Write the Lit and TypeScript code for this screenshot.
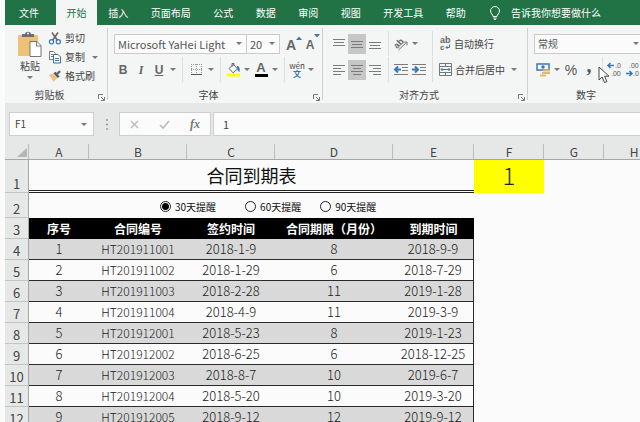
import { LitElement, html, css, svg, nothing } from "lit";
import { customElement, state } from "lit/decorators.js";
import { classMap } from "lit/directives/class-map.js";

const TABS = ["插入", "页面布局", "公式", "数据", "审阅", "视图", "开发工具", "帮助"];

const HEADINGS = ["序号", "合同编号", "签约时间", "合同期限（月份）", "到期时间"];

const CONTRACTS: [string, string, string, string, string][] = [
  ["1", "HT201911001", "2018-1-9", "8", "2018-9-9"],
  ["2", "HT201911002", "2018-1-29", "6", "2018-7-29"],
  ["3", "HT201911003", "2018-2-28", "11", "2019-1-28"],
  ["4", "HT201911004", "2018-4-9", "11", "2019-3-9"],
  ["5", "HT201912001", "2018-5-23", "8", "2019-1-23"],
  ["6", "HT201912002", "2018-6-25", "6", "2018-12-25"],
  ["7", "HT201912003", "2018-8-7", "10", "2019-6-7"],
  ["8", "HT201912004", "2018-5-20", "10", "2019-3-20"],
  ["9", "HT201912005", "2018-9-12", "12", "2019-9-12"],
];

const icon = (w: number, h: number, body: unknown) =>
  html`<svg width=${w} height=${h} viewBox="0 0 ${w} ${h}" fill="none" aria-hidden="true">${body}</svg>`;

const GREY = "#7c7c7c";
const BLUE = "#3a78b5";

const ICONS = {
  bulb: icon(12, 14, svg`<path d="M4 10.500C4 8.500 1.500 7.500 1.500 5a4.500 4.500 0 0 1 9 0C10.500 7.500 8 8.500 8 10.500zM4.300 12h3.400M5 13.400h2" stroke="#fff"/>`),
  paste: icon(26, 27, svg`
    <path d="M1 4h20v21H1z" fill="#eec276"/>
    <path d="M5 3h3c0-3 6-3 6 0h3v3H5z" fill="#6d6d6d"/><circle cx="11" cy="2.500" r="1" fill="#f4f5f5"/>
    <path d="M13 10.500h7l4 4V25.500H13z" fill="#fff" stroke="#777"/><path d="M19.500 10.500v4.500H24" stroke="#777"/>`),
  cut: icon(14, 13, svg`
    <path d="M4 0.500l5.500 8M10 0.500l-5.500 8" stroke="#666" stroke-width="1.600"/>
    <circle cx="3.500" cy="9.800" r="2.100" stroke="${BLUE}" stroke-width="1.200"/>
    <circle cx="10.300" cy="9.800" r="2.100" stroke="${BLUE}" stroke-width="1.200"/>`),
  copy: icon(14, 13, svg`
    <path d="M1.500 0.500h4l2 2v6h-6z" fill="#fff" stroke="#777"/>
    <path d="M5.500 3.500h4.500l2.500 2.500v6h-7z" fill="#fff" stroke="#666"/>
    <path d="M3 3.500h2M3 5.500h2M7 7.500h4M7 9.500h4" stroke="${BLUE}"/>`),
  brush: icon(15, 13, svg`
    <path d="M1 5l5-2 4 5-4 4.500C4.500 9.500 3 7 1 5z" fill="#eec08a"/>
    <path d="M6 3l2-1.500 4.500 5L10.500 8z" fill="#555"/><path d="M9.500 4L13 0.800" stroke="#666" stroke-width="2.400"/>`),
  launcher: icon(7, 7, svg`<path d="M0.500 5V0.500H5M3 3l3 3M6.500 3v3.500H3" stroke="#777"/>`),
  borders: icon(13, 13, svg`
    <path d="M1.500 1v10M6.500 1v10M11.500 1v10M1 1.500h11M1 6.500h11" stroke="#999" stroke-dasharray="1 1"/>
    <path d="M1 11.500h11" stroke="#555"/>`),
  fill: icon(15, 14, svg`
    <path d="M3 5.500L7.500 1.500l4 4.500-4.500 3.800z" fill="#fff" stroke="#666"/><path d="M6 4V0.500h2V3" stroke="#666"/>
    <path d="M11 3c2.500 0 3 2.500 2.500 6-2-0.500-2.500-3-2.500-6z" fill="${BLUE}"/>
    <path d="M0.500 10.500h13.500v3H0.500z" fill="#ffff00"/>`),
  grow: svg`<path d="M0 4L3 0.500 6 4z" fill="${BLUE}"/>`,
  orient: icon(14, 14, svg`<path d="M4.500 13L12.500 5.500M9.500 5h3.500v3.500" stroke="#777"/>
    <text x="-1" y="9" transform="rotate(-45 5 6)" font-size="9" font-weight="bold" fill="#666">ab</text>`),
  wrap: icon(12, 15, svg`
    <text x="1" y="7" font-size="9" font-weight="bold" fill="#666">ab</text>
    <text x="1" y="14" font-size="8" font-weight="bold" fill="#666">c</text>
    <path d="M10.500 8.500v3H7M8.500 10L7 11.500l1.500 1.500" stroke="${BLUE}"/>`),
  merge: icon(13, 13, svg`
    <path d="M0.500 0.500h12v12h-12zM0.500 3.500h12M0.500 9.500h12M6.500 0.500v3M6.500 9.500v3" stroke="#777"/>
    <path d="M2 6.500h9M3.500 5L2 6.500 3.500 8M9.500 5L11 6.500 9.500 8" stroke="${BLUE}"/>`),
  currency: icon(15, 14, svg`
    <path d="M1 1h12v6H1z" fill="#fff" stroke="${BLUE}" stroke-width="1.500"/>
    <circle cx="7" cy="4" r="1.800" fill="${BLUE}"/>
    <path d="M7 7.500h7M6 10h8M4 12.500h6" stroke="#e9b870" stroke-width="2"/>`),
  pointer: icon(13, 18, svg`<path d="M1 1v13l3.200-3 2.300 5.500 2.400-1-2.300-5.300H11z" fill="#fff" stroke="#444"/>`),
};

const lines = (rows: [number, number, number][]) =>
  icon(12, 10, rows.map(([x, y, w]) => svg`<path d="M${x} ${y + 0.5}h${w}" stroke=${GREY}/>`));

const ALIGN = {
  top: lines([[0, 0, 12], [1, 3, 10], [0, 6, 12]]),
  middle: lines([[0, 2, 12], [1, 5, 10], [0, 8, 12]]),
  bottom: lines([[0, 3, 12], [1, 6, 10], [0, 9, 12]]),
  left: lines([[0, 0, 12], [0, 3, 8], [0, 6, 12], [0, 9, 8]]),
  center: lines([[0, 0, 12], [2, 3, 8], [0, 6, 12], [2, 9, 8]]),
  right: lines([[0, 0, 12], [4, 3, 8], [0, 6, 12], [4, 9, 8]]),
};

const indent = (outward: boolean) =>
  icon(14, 12, svg`
    <path d="M0 0.500h14M8 3.500h6M8 6.500h6M0 10.500h14" stroke=${GREY}/>
    <path d=${outward ? "M1 5.500h6M4 2.500L1 5.500l3 3" : "M0 5.500h6M3 2.500l3 3-3 3"} stroke=${BLUE} stroke-width="2"/>`);

const decimals = (more: boolean) =>
  icon(14, 15, svg`
    <text x=${more ? 7 : 3} y="6" font-size="7" fill="#555">${more ? ".0" : ".00"}</text>
    <text x=${more ? 3 : 7} y="14" font-size="7" fill="#555">${more ? ".00" : ".0"}</text>
    <path d=${more ? "M0 3.500h6M2.500 1L0 3.500 2.500 6" : "M0 11.500h6M3.500 9L6 11.500 3.500 14"} stroke=${BLUE} stroke-width="1.600"/>`);

@customElement("app-root")
export class AppRoot extends LitElement {
  @state() private days = 30;

  static styles = css`
    :host {
      display: block;
      min-height: 100vh;
      max-height: 100vh;
      box-sizing: border-box;
      padding-left: 5px;
      overflow: hidden;
      position: relative;
      background: #fbfbfb;
      color: #444;
      font: 10px/14px "Noto Sans CJK SC", sans-serif;
    }
    * { box-sizing: border-box; }
    svg { display: block; flex: none; overflow: visible; }
    svg text { font-family: "Liberation Sans", sans-serif; }
    button, input, select {
      font: inherit;
      color: inherit;
      margin: 0;
      padding: 0;
      border: 0;
      background: none;
      border-radius: 0;
      white-space: nowrap;
    }
    .tabs { display: flex; height: 25px; background: #217346; color: #fff; }
    .tab { padding: 0 11px; flex: 1 1 auto; }
    .tab.file { flex: none; width: 51px; padding: 0 3px 0 0; }
    .tab.active { flex: none; width: 41px; padding: 0; background: #f4f5f5; color: #217346; }
    .tab-list { display: flex; flex: 0 0 380px; }
    .tell { display: flex; align-items: center; gap: 10px; padding-left: 12px; }

    .ribbon { display: flex; height: 78px; background: #f4f5f5; }
    .group { flex: none; display: flex; flex-direction: column; padding: 6px 0 0 6px; position: relative; }
    .group + .group::before {
      content: "";
      position: absolute;
      left: -1px;
      top: 3px;
      bottom: 3px;
      width: 1px;
      background: #cfd0d0;
    }
    .clip { width: 103px; }
    .font { width: 215px; }
    .align { width: 205px; padding-left: 7px; }
    .number { flex: 1 0 112px; }
    .rows { display: flex; flex-direction: column; gap: 1px; height: 56px; }
    .row { display: flex; align-items: center; height: 25px; }
    .foot { display: flex; align-items: center; height: 16px; margin-left: -6px; }
    .foot span { flex: 1; text-align: center; }
    .foot button { width: 14px; padding: 4px 0 0 4px; }
    .tool { display: flex; align-items: center; justify-content: center; width: 18px; height: 20px; flex: none; }
    .tool.wide { width: 20px; }
    .tool.on { background: #c6c6c6; }
    .tool.text { width: auto; padding-left: 3px; gap: 3px; }
    .drop { display: flex; align-items: center; justify-content: center; width: 10px; height: 20px; flex: none; }
    .drop::after, .combo::after {
      content: "";
      border: 3px solid transparent;
      border-top-color: #777;
      border-bottom: 0;
    }
    .sep { flex: none; width: 8px; height: 25px; background: linear-gradient(#dcdddd, #dcdddd) center / 1px 100% no-repeat; }
    .space { width: 8px; }
    .gap { width: 4px; }
    .letter { font: bold 12px/14px "Liberation Sans", sans-serif; color: #666; }
    .italic { font-family: "Liberation Serif", serif; font-style: italic; }
    .under { text-decoration: underline; }
    .sized { align-items: flex-start; width: 18px; font-size: 12px; line-height: 22px; }
    .sized.big { font-size: 14px; width: 20px; }
    .sized svg { margin-top: 2px; }
    .flip { transform: rotate(180deg); display: flex; align-items: flex-end; height: 8px; }
    .ink { flex-direction: column; }
    .ink span { border-bottom: 3px solid #000; width: 13px; font-size: 13px; line-height: 12px; text-align: center; }
    .ink.pinyin { font: 8px/8px "Noto Sans CJK SC", sans-serif; }
    .pinyin b { color: #3a78b5; font-size: 8px; line-height: 8px; }
    .percent { font: 14px/14px "Liberation Sans", sans-serif; color: #555; }
    .comma { font: bold 20px/10px "Liberation Serif", serif; color: #555; padding-bottom: 10px; }

    .combo { display: flex; align-items: center; height: 20px; border: 1px solid #cacbcb; background: #fbfbfb; padding-right: 4px; flex: none; }
    .combo + .combo { border-left: 0; }
    .combo select { appearance: none; flex: 1; min-width: 0; padding-left: 3px; font: 11px/16px "Noto Sans CJK SC", sans-serif; color: #555; }
    .face { width: 133px; }
    .size { width: 33px; }
    .format { width: 110px; }
    .format select { font-size: 10px; }

    .clip .body { display: flex; height: 56px; padding-left: 6px; gap: 5px; }
    .paste { display: flex; flex-direction: column; align-items: center; width: 26px; }
    .paste .drop { height: 8px; }
    .paste .label { line-height: 15px; }
    .stack { display: flex; flex-direction: column; gap: 5px; }
    .stack .line { display: flex; height: 14px; }
    .stack .line .drop { height: 14px; margin-left: 5px; }
    .stack .cmd { display: flex; align-items: center; gap: 3px; }
    .stack .cmd svg { width: 14px; }

    .bar { display: flex; height: 33px; padding: 9px 0 0 4px; background: #e6e8e7; }
    .box { display: flex; align-items: center; height: 24px; border: 1px solid #cdcfce; background: #fbfbfb; }
    .name { width: 85px; padding-right: 4px; }
    .name input { flex: 1; min-width: 0; padding-left: 5px; }
    .dots { width: 25px; display: flex; align-items: center; justify-content: center; color: #999; }
    .edit { width: 92px; justify-content: space-around; margin-right: 2px; }
    .fx { font: italic bold 12px/14px "Liberation Serif", serif; color: #777; }
    .formula { flex: 1; border-right: 0; }
    .formula input { width: 100%; padding-left: 9px; font-size: 11px; }

    .sheet { overflow: hidden; }
    table { table-layout: fixed; width: 659px; border-collapse: separate; border-spacing: 0; }
    .c-head { width: 24px; }
    .c-a, .c-g { width: 60px; }
    .c-b { width: 98px; }
    .c-c { width: 88px; }
    .c-d { width: 118px; }
    .c-e { width: 81px; }
    .c-f { width: 70px; }
    th, td { padding: 0; height: 21px; text-align: center; font-weight: normal; white-space: nowrap; overflow: hidden; }
    .letters th {
      height: 24px;
      vertical-align: bottom;
      font-size: 12px;
      line-height: 14px;
      border-bottom: 1px solid #a5a7a6;
      background: linear-gradient(#bcbebd, #bcbebd) right bottom / 1px 15px no-repeat #e6e8e7;
    }
    .corner svg { margin: 0 2px 2px auto; }
    .rowno {
      background: #e6e8e7;
      border-right: 1px solid #a5a7a6;
      border-bottom: 1px solid #c3c5c4;
      vertical-align: bottom;
      font-size: 13px;
      line-height: 17px;
    }
    .r1 th, .r1 td { height: 33px; }
    .r2 th, .r2 td { height: 25px; }
    .title { font-size: 18px; line-height: 26px; color: #111; border-bottom: 3px double #222; }
    .flag { font-size: 24px; line-height: 30px; font-weight: 300; color: #222; background: #ffff00; vertical-align: top; }
    .choice fieldset { display: flex; gap: 19px; margin: 0; padding: 2px 0 0 131px; border: 0; color: #111; }
    .choice label { display: flex; align-items: center; gap: 4px; }
    .choice label:first-child { margin-right: 10px; }
    .choice input {
      appearance: none;
      width: 11px;
      height: 11px;
      border: 1px solid #222;
      border-radius: 50%;
    }
    .choice input:checked { background: radial-gradient(circle, #000 3px, transparent 4px); }
    .heads .h { background: #000; color: #fff; font-size: 12px; line-height: 18px; font-weight: bold; }
    .data td { border-bottom: 1px solid #2a2a2a; font-size: 13px; line-height: 18px; font-weight: 300; color: #222; }
    .data .id { font-size: 12px; }
    .data .last { border-right: 1px solid #2a2a2a; }
    .data.shade td { background: #d9d9d9; }
    .cursor { position: absolute; left: 598px; top: 66px; }
  `;

  private drop(label: string) {
    return html`<button class="drop" aria-label=${label}></button>`;
  }

  private tool(label: string, content: unknown, classes = "") {
    return html`<button class="tool ${classes}" title=${label}>${content}</button>`;
  }

  private foot(label: string, launcher = true) {
    return html`<div class="foot"><span>${label}</span>
      ${launcher ? html`<button aria-label="${label}设置">${ICONS.launcher}</button>` : nothing}</div>`;
  }

  private renderRibbon() {
    const sep = html`<span class="sep"></span>`;
    return html`
      <section class="ribbon">
        <div class="group clip">
          <div class="body">
            <button class="paste">${ICONS.paste}<span class="label">粘贴</span><span class="drop"></span></button>
            <div class="stack">
              <div class="line"><button class="cmd">${ICONS.cut}剪切</button></div>
              <div class="line"><button class="cmd">${ICONS.copy}复制</button>${this.drop("复制选项")}</div>
              <div class="line"><button class="cmd">${ICONS.brush}格式刷</button></div>
            </div>
          </div>
          ${this.foot("剪贴板")}
        </div>
        <div class="group font">
          <div class="rows">
            <div class="row">
              <div class="combo face"><select aria-label="字体"><option>Microsoft YaHei Light</option></select></div>
              <div class="combo size"><select aria-label="字号"><option>20</option></select></div>
              <span class="gap"></span>
              ${this.tool("增大字号", html`A${icon(6, 4, ICONS.grow)}`, "letter sized big")}
              ${this.tool("减小字号", html`A<span class="flip">${icon(6, 4, ICONS.grow)}</span>`, "letter sized")}
            </div>
            <div class="row">
              ${this.tool("加粗", "B", "letter")}${this.tool("倾斜", "I", "letter italic")}${this.tool("下划线", "U", "letter under")}
              ${this.drop("下划线选项")}${sep}
              ${this.tool("边框", ICONS.borders, "wide")}${this.drop("边框选项")}${sep}
              ${this.tool("填充颜色", ICONS.fill)}${this.drop("填充选项")}
              ${this.tool("字体颜色", html`<span>A</span>`, "letter ink")}${this.drop("颜色选项")}${sep}
              ${this.tool("拼音", html`wén<b>文</b>`, "ink pinyin")}${this.drop("拼音选项")}
            </div>
          </div>
          ${this.foot("字体")}
        </div>
        <div class="group align">
          <div class="rows">
            <div class="row">
              ${this.tool("顶端对齐", ALIGN.top)}${this.tool("垂直居中", ALIGN.middle, "on")}${this.tool("底端对齐", ALIGN.bottom)}${sep}
              ${this.tool("方向", ICONS.orient)}${this.drop("方向选项")}<span class="space"></span>${sep}
              ${this.tool("自动换行", html`${ICONS.wrap}自动换行`, "text")}
            </div>
            <div class="row">
              ${this.tool("左对齐", ALIGN.left)}${this.tool("居中", ALIGN.center, "on")}${this.tool("右对齐", ALIGN.right)}${sep}
              ${this.tool("减少缩进量", indent(true))}${this.tool("增加缩进量", indent(false))}${sep}
              ${this.tool("合并后居中", html`${ICONS.merge}合并后居中`, "text")}<span class="gap"></span>${this.drop("合并选项")}
            </div>
          </div>
          ${this.foot("对齐方式")}
        </div>
        <div class="group number">
          <div class="rows">
            <div class="row">
              <div class="combo format"><select aria-label="数字格式"><option>常规</option></select></div>
            </div>
            <div class="row">
              ${this.tool("会计格式", ICONS.currency)}${this.drop("会计格式选项")}
              ${this.tool("百分比", "%", "percent")}${this.tool("千位分隔", ",", "comma")}${sep}
              ${this.tool("增加小数位", decimals(true))}${this.tool("减少小数位", decimals(false))}
            </div>
          </div>
          ${this.foot("数字", false)}
        </div>
      </section>`;
  }

  private renderSheet() {
    return html`
      <div class="sheet">
        <table>
          <colgroup>
            ${["head", "a", "b", "c", "d", "e", "f", "g", "g"].map((c) => html`<col class="c-${c}" />`)}
          </colgroup>
          <thead>
            <tr class="letters">
              <th class="corner" aria-label="全选">${icon(10, 9, svg`<path d="M10 0v9H0z" fill="#b4b6b5"/>`)}</th>
              ${["A", "B", "C", "D", "E", "F", "G", "H"].map((l) => html`<th scope="col">${l}</th>`)}
            </tr>
          </thead>
          <tbody>
            <tr class="r1">
              <th class="rowno" scope="row">1</th>
              <td class="title" colspan="5">合同到期表</td>
              <td class="flag">${this.days / 30}</td>
            </tr>
            <tr class="r2">
              <th class="rowno" scope="row">2</th>
              <td class="choice" colspan="5">
                <fieldset aria-label="提醒">
                  ${[30, 60, 90].map((d) => html`
                    <label><input type="radio" name="days" .checked=${this.days === d} @change=${() => (this.days = d)} />${d}天提醒</label>`)}
                </fieldset>
              </td>
            </tr>
            <tr class="heads">
              <th class="rowno" scope="row">3</th>
              ${HEADINGS.map((h) => html`<th class="h" scope="col">${h}</th>`)}
            </tr>
            ${CONTRACTS.map((row, i) => html`
              <tr class=${classMap({ data: true, shade: i % 2 === 0 })}>
                <th class="rowno" scope="row">${i + 4}</th>
                ${row.map((v, c) => html`<td class=${classMap({ id: c === 1, last: c === 4 })}>${v}</td>`)}
              </tr>`)}
          </tbody>
        </table>
      </div>`;
  }

  render() {
    return html`
      <nav class="tabs">
        <button class="tab file">文件</button>
        <button class="tab active">开始</button>
        <div class="tab-list">${TABS.map((t) => html`<button class="tab">${t}</button>`)}</div>
        <button class="tell">${ICONS.bulb}告诉我你想要做什么</button>
      </nav>
      ${this.renderRibbon()}
      <div class="bar">
        <div class="box name"><input aria-label="名称框" value="F1" />${this.drop("名称列表")}</div>
        <span class="dots">${icon(2, 11, svg`<path d="M0 1h2M0 5.500h2M0 10h2" stroke="#999" stroke-width="1.500"/>`)}</span>
        <div class="box edit">
          <button aria-label="取消">${icon(9, 9, svg`<path d="M1 1l7 7M8 1L1 8" stroke="#bbb" stroke-width="1.400"/>`)}</button>
          <button aria-label="输入">${icon(11, 9, svg`<path d="M1 5l3 3 6-7" stroke="#bbb" stroke-width="1.600"/>`)}</button>
          <button class="fx" aria-label="插入函数">fx</button>
        </div>
        <div class="box formula"><input aria-label="编辑栏" value="1" /></div>
      </div>
      ${this.renderSheet()}
      <span class="cursor">${ICONS.pointer}</span>
    `;
  }
}
